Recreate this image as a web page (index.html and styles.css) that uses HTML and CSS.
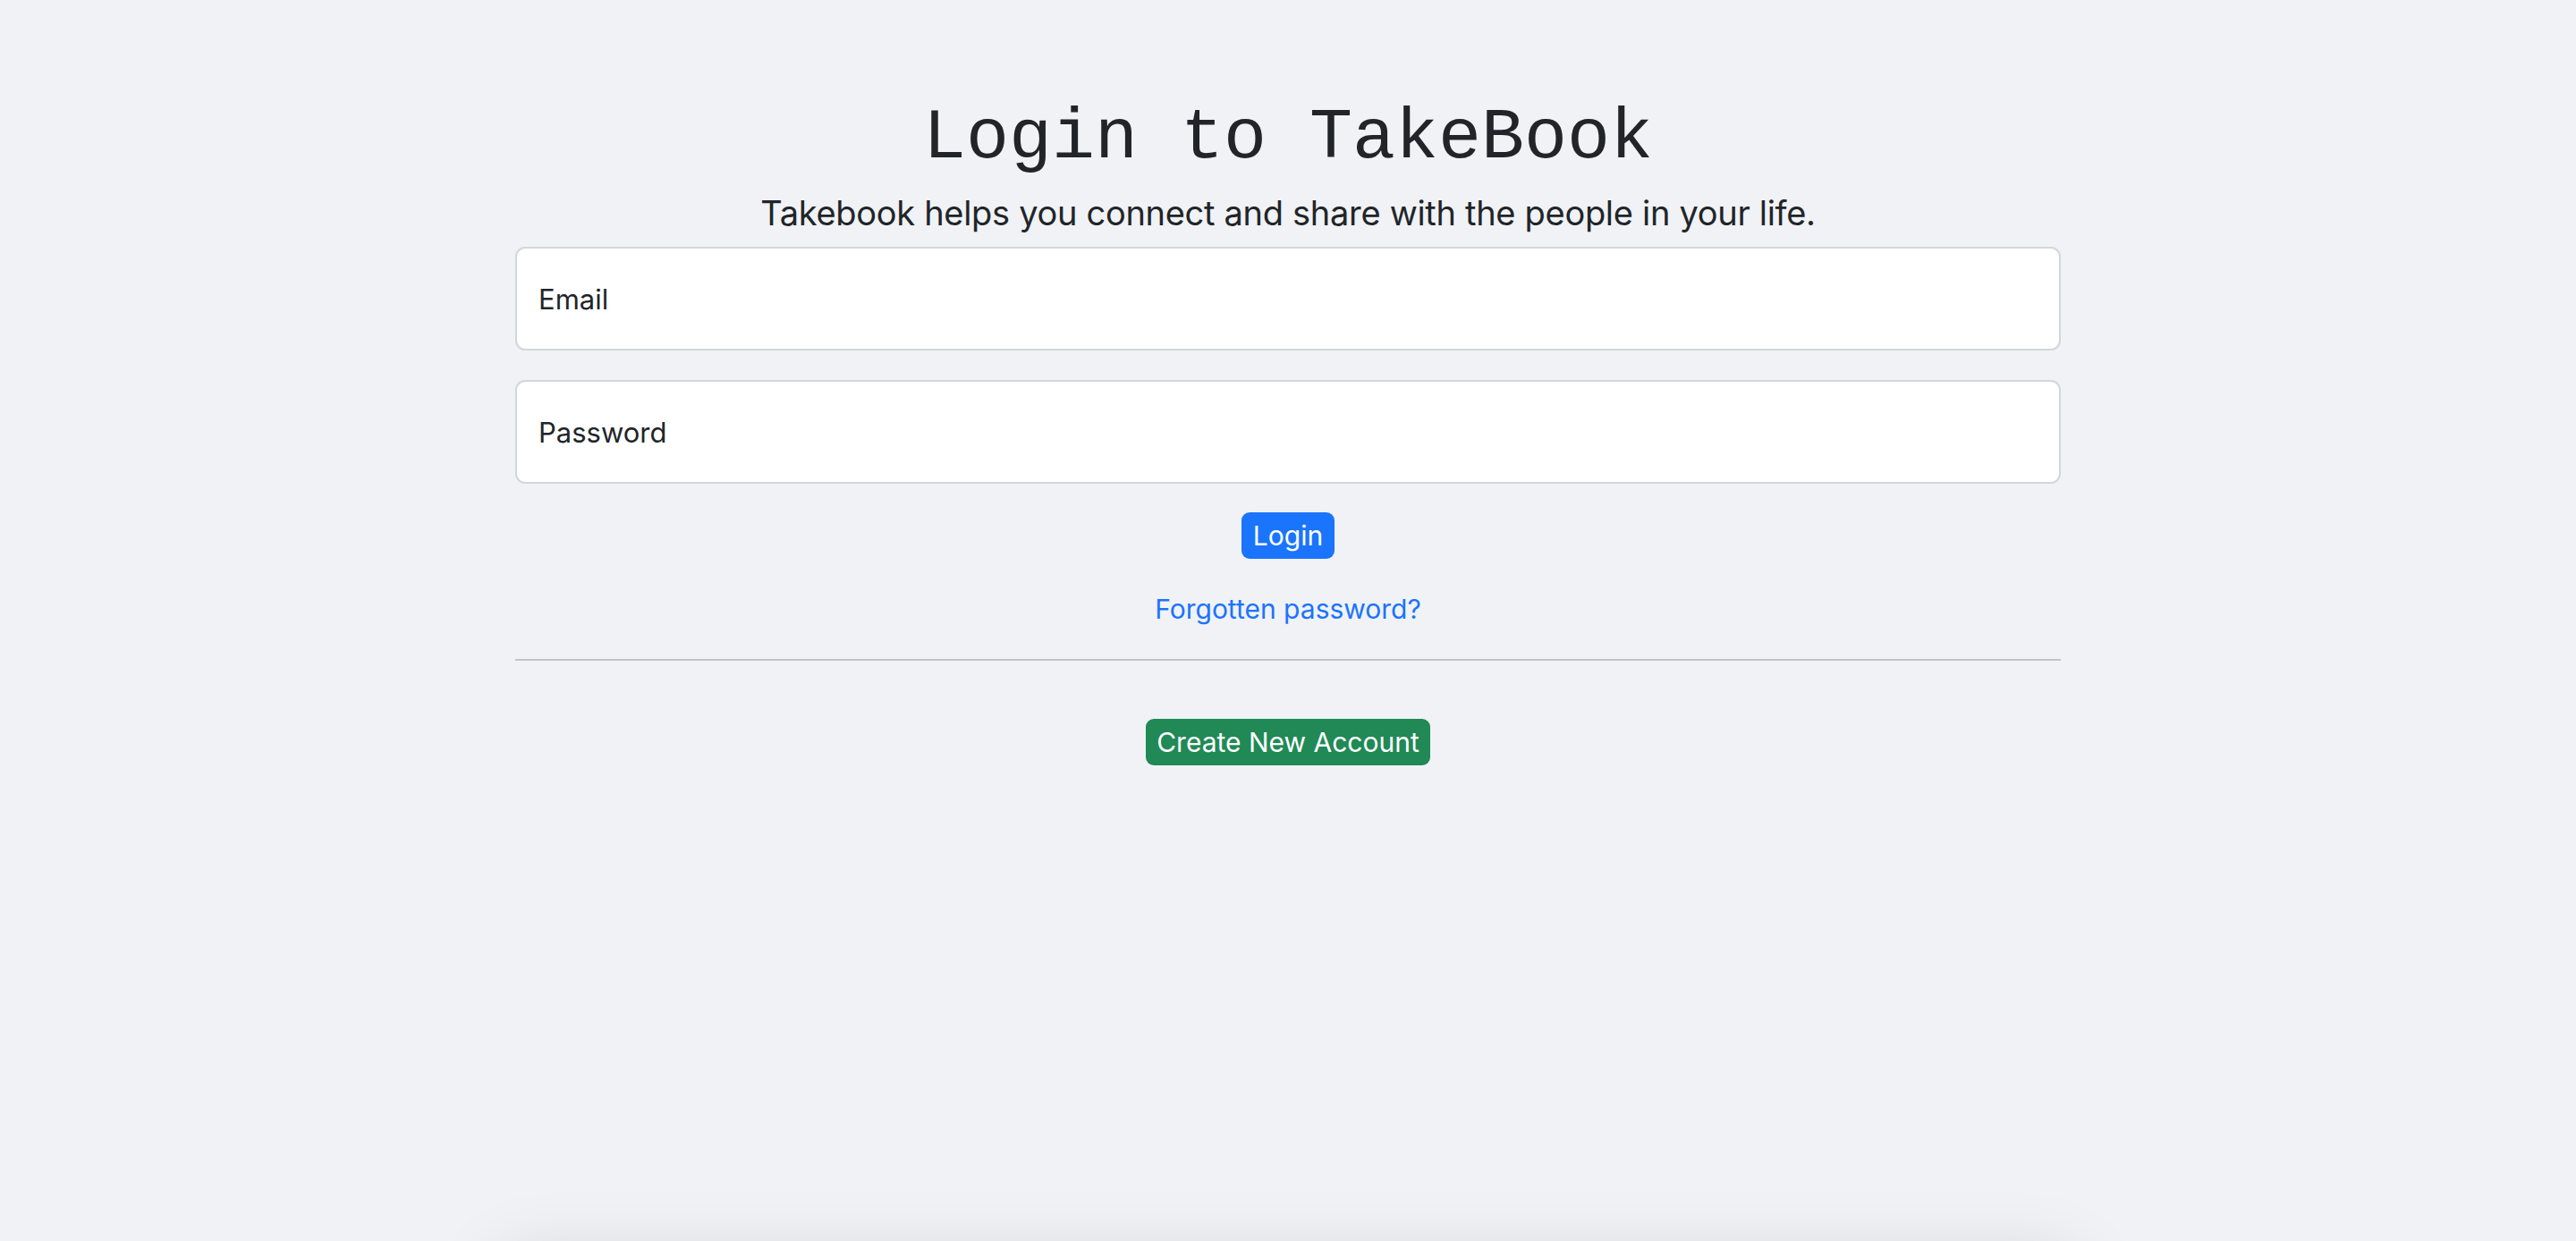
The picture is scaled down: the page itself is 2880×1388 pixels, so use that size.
FILE: index.html
```html
<!DOCTYPE html>
<html lang="en">
<head>
<meta charset="utf-8">
<title>Login to TakeBook</title>
<link rel="stylesheet" href="styles.css">
</head>
<body>
<main class="page">
  <section class="login">
    <h1 class="title">Login to TakeBook</h1>
    <p class="lead">Takebook helps you connect and share with the people in your life.</p>
    <form class="form">
      <label class="field"><input class="input" type="email" placeholder="Email"></label>
      <label class="field"><input class="input" type="password" placeholder="Password"></label>
      <button class="btn btn-primary" type="button">Login</button>
      <a class="link" href="#">Forgotten password?</a>
      <hr class="divider">
      <button class="btn btn-success" type="button">Create New Account</button>
    </form>
  </section>
  <div class="below-card"></div>
</main>
</body>
</html>
```
FILE: styles.css
```css
html, body {
  margin: 0;
  padding: 0;
}
body {
  background: #f0f2f5;
  color: #212529;
  font-family: Inter, "Noto Sans", "Liberation Sans", sans-serif;
  overflow: hidden;
  height: 1388px;
}
.page {
  display: flex;
  flex-direction: column;
  align-items: center;
}
.login {
  width: 1728px;
  display: flex;
  flex-direction: column;
  align-items: center;
  padding-top: 107px;
}
.title {
  font-family: "Liberation Mono", "Courier New", monospace;
  font-weight: 400;
  font-size: 80px;
  line-height: 96px;
  margin: 0;
  color: #212529;
}
.lead {
  margin: 11px 0 0;
  font-size: 38px;
  line-height: 48px;
  color: #212529;
  letter-spacing: -0.3px;
}
.form {
  width: 100%;
  display: flex;
  flex-direction: column;
  align-items: center;
  margin-top: 14px;
}
.field {
  width: 100%;
  display: block;
  margin-bottom: 33px;
}
.input {
  box-sizing: border-box;
  width: 100%;
  height: 116px;
  border: 2px solid #d3d6db;
  border-radius: 11px;
  background: #fff;
  padding: 0 24px;
  font-family: inherit;
  font-size: 31px;
  color: #212529;
  outline: none;
}
.input::placeholder {
  color: #212529;
  opacity: 1;
}
.btn {
  border: none;
  border-radius: 9px;
  color: #fff;
  font-family: inherit;
  font-size: 30px;
  line-height: 38px;
  cursor: pointer;
}
.btn-primary {
  background: #1b74fc;
  padding: 7px 13px;
  margin-top: -1px;
}
.btn-success {
  background: #208956;
  padding: 7px 12px;
  margin-top: 65px;
}
.link {
  margin-top: 36px;
  color: #1b74fc;
  text-decoration: none;
  font-size: 30px;
  line-height: 40px;
}
.divider {
  width: 100%;
  box-sizing: border-box;
  margin: 36px 0 0;
  border: none;
  border-top: 2px solid #c3c5ca;
  height: 0;
}
.below-card {
  width: 1760px;
  height: 300px;
  margin-top: 556px;
  background: #f0f2f5;
  box-shadow: 0 0 80px rgba(0, 0, 0, 0.14);
}
```
